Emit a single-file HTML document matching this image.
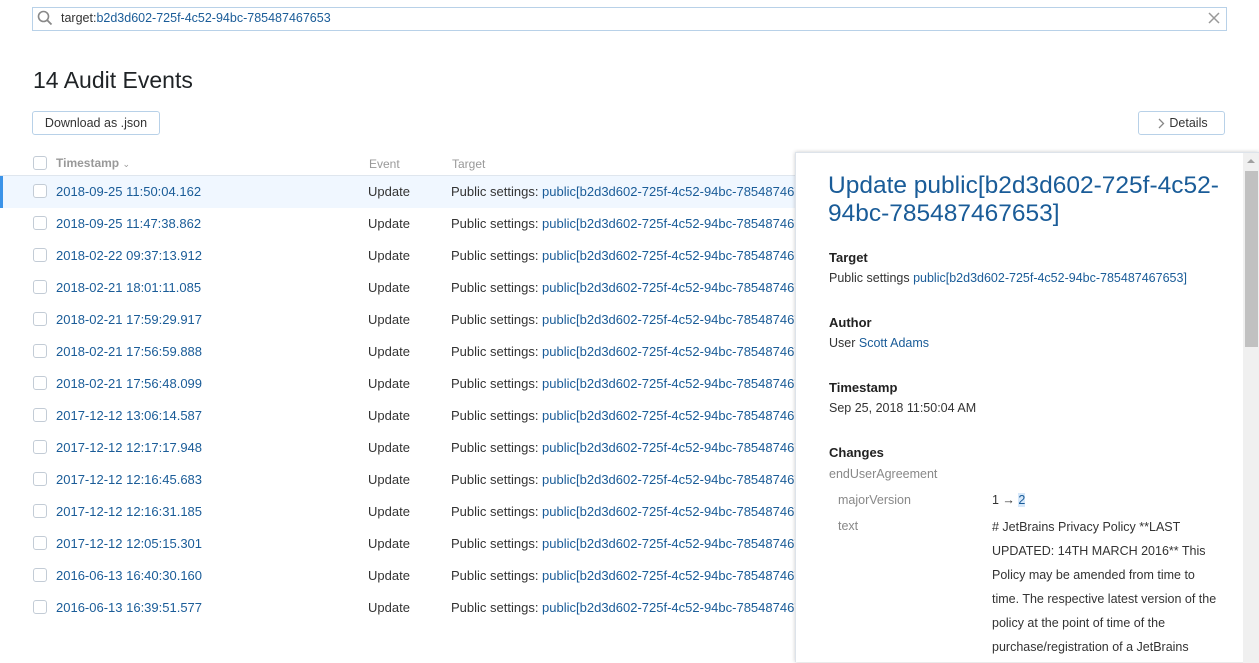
<!DOCTYPE html>
<html><head><meta charset="utf-8"><style>
*{box-sizing:border-box;margin:0;padding:0}
body{width:1259px;height:656px;overflow:hidden;background:#fff;font-family:"Liberation Sans",sans-serif;color:#1f2326;position:relative;font-size:13px}
.abs{position:absolute;white-space:nowrap}
.search{left:32px;top:7px;width:1195px;height:24px;border:1px solid #b8d1e8;}
a,.lnk{color:#1a5c98;text-decoration:none}
.btn{border:1px solid #b8d1e8;border-radius:3px;height:24px;font-size:12.5px;line-height:22px;text-align:center;color:#333}
.cb{position:absolute;left:33px;width:14px;height:14px;border:1px solid #c3ccd6;border-radius:3px;background:#fff}
.row{position:absolute;left:0;width:795px;height:32px;font-size:13px}
.row .ts{position:absolute;left:56px;top:8px;color:#1a5c98}
.row .ev{position:absolute;left:368px;top:8px;color:#333}
.row .tg{position:absolute;left:451px;top:8px;color:#333;white-space:nowrap}
.panel{position:absolute;left:795px;top:152px;width:464px;height:510px;background:#fff;box-shadow:0 0 4px rgba(0,0,0,.2);border-left:1px solid #dde3ea;border-top:1px solid #dde3ea}
.h{position:absolute;left:33px;font-weight:bold;font-size:13px;color:#222}
.v{position:absolute;left:33px;font-size:12.5px;color:#333;white-space:nowrap}
.g{color:#888}
</style></head><body>
<div class="abs search"></div>
<svg class="abs" style="left:37px;top:10px" width="16" height="16" viewBox="0 0 16 16"><circle cx="6.5" cy="6.5" r="5" fill="none" stroke="#888" stroke-width="1.6"/><path d="M10 10l4.5 4.5" stroke="#888" stroke-width="1.8"/></svg>
<div class="abs" style="left:61px;top:11px;font-size:12.5px;color:#333">target:<span class="lnk">b2d3d602-725f-4c52-94bc-785487467653</span></div>
<svg class="abs" style="left:1208px;top:12px" width="12" height="12"><path d="M1 1L11 11M11 1L1 11" stroke="#999" stroke-width="1.5"/></svg>
<div class="abs" style="left:33px;top:67px;font-size:23px;color:#1f2326">14 Audit Events</div>
<div class="abs btn" style="left:32px;top:111px;width:128px">Download as .json</div>
<div class="abs btn" style="left:1138px;top:111px;width:87px;padding-left:14px">Details</div>
<svg class="abs" style="left:1157px;top:118px" width="8" height="11"><path d="M2 1L6.5 5.5L2 10" stroke="#888" stroke-width="1.3" fill="none"/></svg>
<div class="cb" style="top:156px"></div>
<div class="abs" style="left:56px;top:156px;font-size:12px;color:#999;font-weight:bold">Timestamp <span style="font-weight:normal;font-size:9px">⌄</span></div>
<div class="abs" style="left:369px;top:157px;font-size:12px;color:#999">Event</div>
<div class="abs" style="left:452px;top:157px;font-size:12px;color:#999">Target</div>
<div class="abs" style="left:0;top:175px;width:795px;height:1px;background:#dfe6ee"></div>
<div class="row" style="top:176px;background:#f0f7ff;border-left:3px solid #3b93e8"></div>
<div id="rows"></div>
<script>
var t=["2018-09-25 11:50:04.162","2018-09-25 11:47:38.862","2018-02-22 09:37:13.912","2018-02-21 18:01:11.085","2018-02-21 17:59:29.917","2018-02-21 17:56:59.888","2018-02-21 17:56:48.099","2017-12-12 13:06:14.587","2017-12-12 12:17:17.948","2017-12-12 12:16:45.683","2017-12-12 12:16:31.185","2017-12-12 12:05:15.301","2016-06-13 16:40:30.160","2016-06-13 16:39:51.577"];
var h="";t.forEach(function(s,i){var y=176+i*32;h+='<div class="row" style="top:'+y+'px"><div class="cb" style="top:8px"></div><div class="ts">'+s+'</div><div class="ev">Update</div><div class="tg">Public settings: <span class="lnk">public[b2d3d602-725f-4c52-94bc-785487467653]</span></div></div>';});
document.getElementById("rows").innerHTML=h;
</script>
<div class="panel">
<div class="abs" style="left:32px;top:19px;font-size:24.5px;line-height:28px;color:#1a5c98;white-space:normal;width:400px">Update public[b2d3d602-725f-4c52-94bc-785487467653]</div>
<div class="h" style="top:97px">Target</div>
<div class="v" style="top:118px">Public settings <span class="lnk">public[b2d3d602-725f-4c52-94bc-785487467653]</span></div>
<div class="h" style="top:162px">Author</div>
<div class="v" style="top:183px">User <span class="lnk">Scott Adams</span></div>
<div class="h" style="top:227px">Timestamp</div>
<div class="v" style="top:248px">Sep 25, 2018 11:50:04 AM</div>
<div class="h" style="top:292px">Changes</div>
<div class="v g" style="top:314px">endUserAgreement</div>
<div class="v g" style="top:340px;left:42px">majorVersion</div>
<div class="v" style="top:340px;left:196px">1 → <span style="background:#d6e8fa" class="lnk">2</span></div>
<div class="v g" style="top:366px;left:42px">text</div>
<div class="v" style="top:362px;left:196px;white-space:normal;width:240px;line-height:24px">
# JetBrains Privacy Policy **LAST<br>UPDATED: 14TH MARCH 2016** This<br>Policy may be amended from time to<br>time. The respective latest version of the<br>policy at the point of time of the<br>purchase/registration of a JetBrains</div>
<div class="abs" style="left:447px;top:0;width:17px;height:510px;background:#f0f0f0"></div>
<div class="abs" style="left:449px;top:18px;width:13px;height:176px;background:#c1c1c1"></div>
<svg class="abs" style="left:450px;top:4px" width="10" height="8"><path d="M1 6L5 2L9 6Z" fill="#a0a0a0"/></svg>
</div>
</body></html>
